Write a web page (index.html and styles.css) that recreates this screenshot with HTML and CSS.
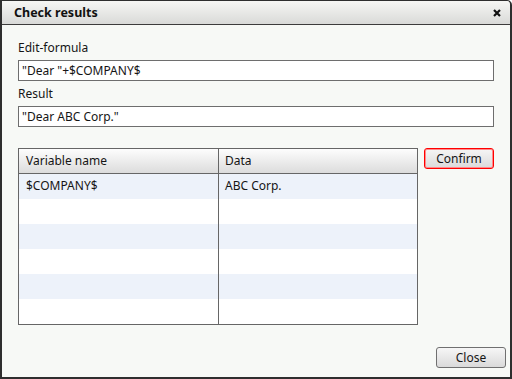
FILE: index.html
```html
<!DOCTYPE html>
<html lang="en">
<head>
  <meta charset="UTF-8" />
  <title>Check results</title>
  <link rel="stylesheet" href="styles.css">
</head>
<body>
  <div class="dialog">
    <div class="dialog-title">
      <span>Check results</span>
      <a class="dialog-close" href="#">
        <svg width="8" height="8" viewBox="0 0 8 8">
          <path d="M1 1 L7 7 M7 1 L1 7" stroke="#111" stroke-width="2.2" />
        </svg>
      </a>
    </div>

    <div class="dialog-body">
      <label class="field-label">Edit-formula</label>
      <div class="field">"Dear "+$COMPANY$</div>

      <label class="field-label">Result</label>
      <div class="field">"Dear ABC Corp."</div>

      <div class="table-row">
        <div class="var-table">
          <div class="var-head">
            <div class="cell">Variable name</div>
            <div class="cell">Data</div>
          </div>
          <div class="var-line">
            <div class="cell">$COMPANY$</div>
            <div class="cell">ABC Corp.</div>
          </div>
          <div class="var-line"><div class="cell"></div><div class="cell"></div></div>
          <div class="var-line"><div class="cell"></div><div class="cell"></div></div>
          <div class="var-line"><div class="cell"></div><div class="cell"></div></div>
          <div class="var-line"><div class="cell"></div><div class="cell"></div></div>
          <div class="var-line"><div class="cell"></div><div class="cell"></div></div>
        </div>
        <a class="btn btn-confirm" href="#">Confirm</a>
      </div>
    </div>

    <div class="dialog-footer">
      <a class="btn" href="#">Close</a>
    </div>
  </div>
</body>
</html>
```

FILE: styles.css
```css
* {
  margin: 0;
  padding: 0;
  box-sizing: border-box;
}

body {
  background: #fff;
  font-family: 'Noto Sans', 'Liberation Sans', sans-serif;
  font-size: 12px;
  color: #151515;
}

.dialog {
  width: 512px;
  height: 379px;
  display: flex;
  flex-direction: column;
  background: #f7f9f6;
  border: 2px solid #2e2e2e;
  border-top-width: 1px;
  border-top-right-radius: 5px;
}

.dialog-title {
  height: 24px;
  display: flex;
  align-items: center;
  justify-content: space-between;
  padding: 0 9px 0 12px;
  background: linear-gradient(#f6f6f4, #d9dad8);
  border-bottom: 1px solid #3c3c3c;
  border-top-right-radius: 4px;
  font-size: 12.5px;
  font-weight: bold;
  line-height: 16px;
  color: #111;
}

.dialog-close {
  display: flex;
  margin-top: 1px;
}

.dialog-body {
  flex: 1;
  display: flex;
  flex-direction: column;
  padding: 15px 16px 0 16px;
}

.field-label {
  display: block;
  line-height: 16px;
  margin-bottom: 4px;
}

.field {
  height: 21px;
  line-height: 19px;
  padding: 0 3px;
  background: #fff;
  border: 1px solid #6e6e6e;
  margin-bottom: 5px;
}

.table-row {
  display: flex;
  align-items: flex-start;
  gap: 6px;
  margin-top: 16px;
}

.var-table {
  width: 400px;
  border: 1px solid #666;
  background: #fff;
}

.var-head,
.var-line {
  display: flex;
}

.var-head {
  height: 25px;
  background: linear-gradient(#fdfdfd, #dcdcdc);
  border-bottom: 1px solid #666;
}

.var-line {
  height: 25px;
}

.var-line:nth-child(even) {
  background: #edf2fa;
}

.cell {
  line-height: 24px;
  padding-left: 7px;
}

.cell:first-child {
  width: 199px;
}

.cell + .cell {
  flex: 1;
  border-left: 1px solid #666;
  padding-left: 6px;
}

.btn {
  display: block;
  width: 70px;
  height: 21px;
  line-height: 19px;
  text-align: center;
  text-decoration: none;
  color: #151515;
  background: linear-gradient(#f6f6f6, #dadada);
  border: 1px solid #707070;
  border-radius: 3px;
}

.btn-confirm {
  border-color: #ff0000;
  box-shadow: inset 0 0 0 1px #ff8a8a;
}

.dialog-footer {
  display: flex;
  justify-content: flex-end;
  padding: 0 4px 9px 0;
}
```
